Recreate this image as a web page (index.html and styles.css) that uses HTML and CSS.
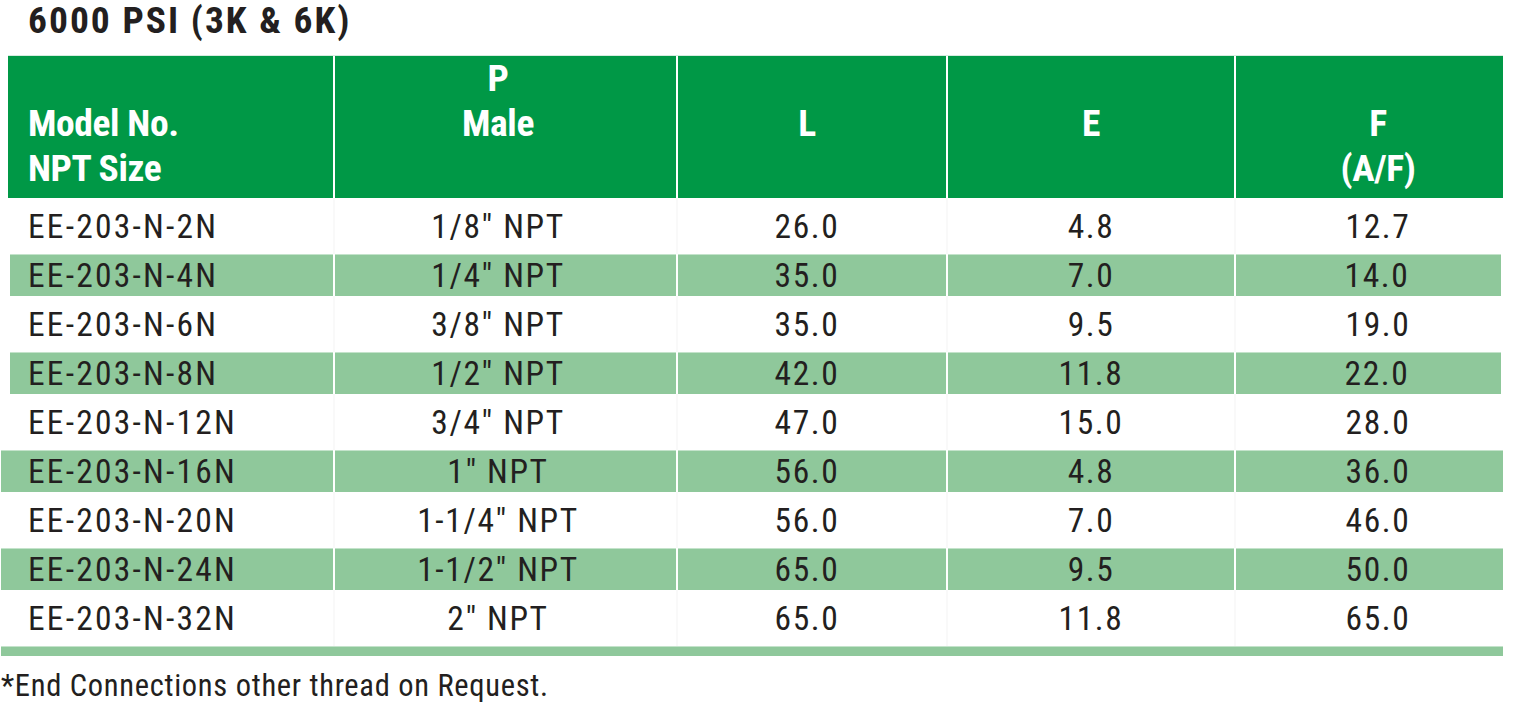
FILE: index.html
```html
<!DOCTYPE html>
<html lang="en">
<head>
<meta charset="utf-8">
<title>6000 PSI (3K &amp; 6K)</title>
<link rel="stylesheet" href="styles.css">
</head>
<body>
<main class="sheet">
  <h1 class="title">6000 PSI (3K &amp; 6K)</h1>
  <div class="table">
    <div class="row head">
      <div class="cell c1"><span class="ln ln2">Model No.</span><span class="ln ln3">NPT Size</span></div>
      <div class="cell c2"><span class="ln ln1">P</span><span class="ln ln2">Male</span></div>
      <div class="cell c3"><span class="ln ln2">L</span></div>
      <div class="cell c4"><span class="ln ln2">E</span></div>
      <div class="cell c5"><span class="ln ln2">F</span><span class="ln ln3">(A/F)</span></div>
    </div>
    <div class="row plain">
      <div class="cell c1">EE-203-N-2N</div><div class="cell c2">1/8" NPT</div><div class="cell c3">26.0</div><div class="cell c4">4.8</div><div class="cell c5">12.7</div>
    </div>
    <div class="row shade inset">
      <div class="cell c1">EE-203-N-4N</div><div class="cell c2">1/4" NPT</div><div class="cell c3">35.0</div><div class="cell c4">7.0</div><div class="cell c5">14.0</div>
    </div>
    <div class="row plain">
      <div class="cell c1">EE-203-N-6N</div><div class="cell c2">3/8" NPT</div><div class="cell c3">35.0</div><div class="cell c4">9.5</div><div class="cell c5">19.0</div>
    </div>
    <div class="row shade inset">
      <div class="cell c1">EE-203-N-8N</div><div class="cell c2">1/2" NPT</div><div class="cell c3">42.0</div><div class="cell c4">11.8</div><div class="cell c5">22.0</div>
    </div>
    <div class="row plain">
      <div class="cell c1">EE-203-N-12N</div><div class="cell c2">3/4" NPT</div><div class="cell c3">47.0</div><div class="cell c4">15.0</div><div class="cell c5">28.0</div>
    </div>
    <div class="row shade">
      <div class="cell c1">EE-203-N-16N</div><div class="cell c2">1" NPT</div><div class="cell c3">56.0</div><div class="cell c4">4.8</div><div class="cell c5">36.0</div>
    </div>
    <div class="row plain">
      <div class="cell c1">EE-203-N-20N</div><div class="cell c2">1-1/4" NPT</div><div class="cell c3">56.0</div><div class="cell c4">7.0</div><div class="cell c5">46.0</div>
    </div>
    <div class="row shade">
      <div class="cell c1">EE-203-N-24N</div><div class="cell c2">1-1/2" NPT</div><div class="cell c3">65.0</div><div class="cell c4">9.5</div><div class="cell c5">50.0</div>
    </div>
    <div class="row plain">
      <div class="cell c1">EE-203-N-32N</div><div class="cell c2">2" NPT</div><div class="cell c3">65.0</div><div class="cell c4">11.8</div><div class="cell c5">65.0</div>
    </div>
    <div class="endbar"></div>
  </div>
  <p class="note">*End Connections other thread on Request.</p>
</main>
</body>
</html>
```

FILE: styles.css
```css
* { box-sizing: border-box; }

html, body {
  margin: 0;
  padding: 0;
  background: #ffffff;
}

body {
  font-family: Roboto, "DejaVu Sans Condensed", sans-serif;
  font-stretch: 75%;
  color: #231f20;
  width: 1528px;
  height: 704px;
  overflow: hidden;
}

.sheet {
  display: flex;
  flex-direction: column;
}

.title {
  margin: 0 0 16px 28px;
  font-size: 37.5px;
  line-height: 40px;
  font-weight: 700;
  letter-spacing: 2px;
  color: #231f20;
}

.table {
  display: flex;
  flex-direction: column;
  width: 1504px;
}

.row {
  display: grid;
  grid-template-columns: minmax(0, 1fr) 341px 268px 286px var(--last, 267px);
  column-gap: 2px;
  margin-left: var(--ml, 1px);
  margin-right: var(--mr, 1px);
}

.row.head {
  --ml: 8px;
  height: 142px;
  background: #ffffff;
  box-shadow: 0 -1px 0 #d6ece0;
}

.row.plain {
  height: 56px;
  background: #f9f9f9;
}

.row.plain .cell {
  background: #ffffff;
}

.row.shade {
  height: 42px;
  background: #ffffff;
}

.row.inset {
  --ml: 10px;
  --mr: 3px;
  --last: 265px;
}

.cell {
  display: flex;
  align-items: center;
  justify-content: center;
  font-size: 33.5px;
  letter-spacing: 1.6px;
  white-space: nowrap;
}

.row.shade .cell {
  background: #8fc89b;
  box-shadow: inset 0 1px 0 #c4e3cb;
}

.cell.c1 {
  justify-content: flex-start;
  padding-left: 27px;
  letter-spacing: 2.2px;
}

.row.inset .cell.c1 { padding-left: 18px; }

.cell.c2 { padding-right: 15px; }
.cell.c3 { padding-right: 10px; }
.cell.c5 { padding-left: 17px; }

.row.head .cell {
  display: grid;
  grid-template-rows: repeat(3, 45px);
  align-items: center;
  justify-items: center;
  align-content: start;
  background: #009846;
  color: #ffffff;
  font-weight: 700;
  font-size: 37.5px;
  line-height: 45px;
  letter-spacing: -0.4px;
}

.row.head .cell.c1 {
  justify-items: start;
  padding-left: 20px;
}

.ln { display: block; }
.ln1 { grid-row: 1; }
.ln2 { grid-row: 2; }
.ln3 { grid-row: 3; }

.endbar {
  height: 10px;
  margin: 0 1px;
  background: #8fc89b;
  box-shadow: inset 0 1px 0 #c4e3cb;
}

.note {
  margin: 13px 0 0 1px;
  font-size: 30.5px;
  line-height: 34px;
  letter-spacing: 0.7px;
  color: #231f20;
}
```
